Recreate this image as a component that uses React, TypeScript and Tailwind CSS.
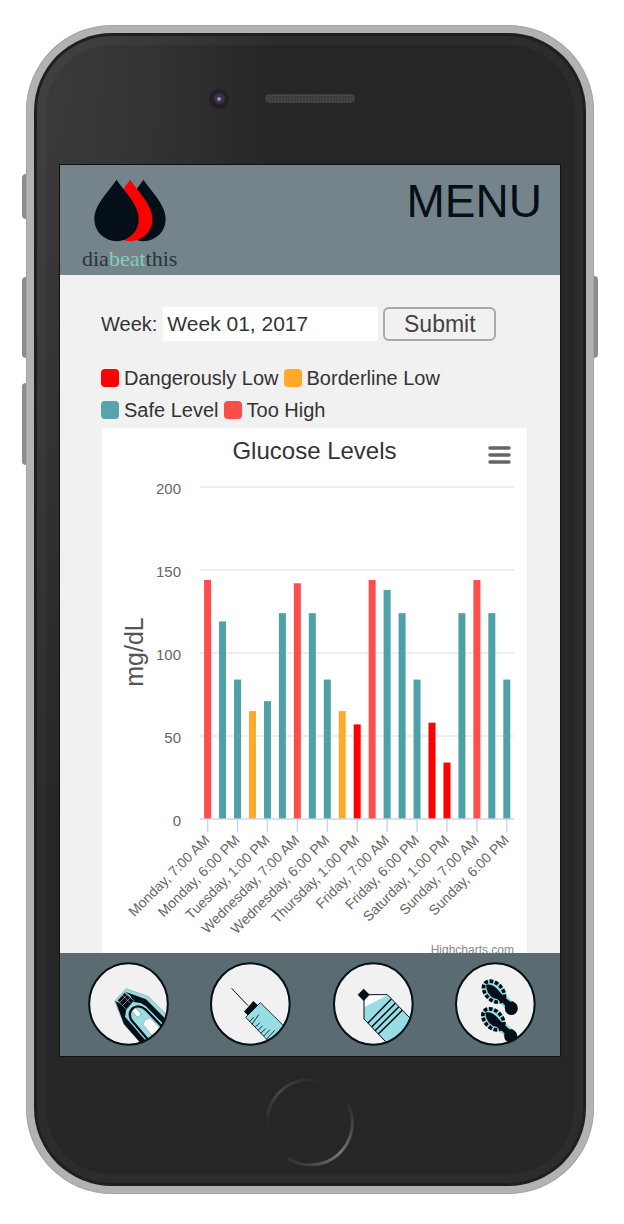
import type { ReactNode } from "react";

const TEAL = "#4fa1a8";
const HIGH = "#ff4d4d";
const LOW = "#ffaa2b";
const DANGER = "#ff0000";
const INK = "#040f17";
const AQUA = "#98dde4";

const legend = [
  { label: "Dangerously Low", swatch: "bg-[#ff0000]" },
  { label: "Borderline Low", swatch: "bg-[#ffaa2b]" },
  { label: "Safe Level", swatch: "bg-[#58a4ab]" },
  { label: "Too High", swatch: "bg-[#fb4b4b]" },
];

const readings: [number, string][] = [
  [144, HIGH], [119, TEAL], [84, TEAL], [65, LOW], [71, TEAL], [124, TEAL], [142, HIGH],
  [124, TEAL], [84, TEAL], [65, LOW], [57, DANGER], [144, HIGH], [138, TEAL], [124, TEAL],
  [84, TEAL], [58, DANGER], [34, DANGER], [124, TEAL], [144, HIGH], [124, TEAL], [84, TEAL],
];

const times = [
  "Monday, 7:00 AM", "Monday, 6:00 PM", "Tuesday, 1:00 PM", "Wednesday, 7:00 AM",
  "Wednesday, 6:00 PM", "Thursday, 1:00 PM", "Friday, 7:00 AM", "Friday, 6:00 PM",
  "Saturday, 1:00 PM", "Sunday, 7:00 AM", "Sunday, 6:00 PM",
];

const BASE = 391;
const UNIT = 1.66;
const barX = (i: number) => 105.6 + i * 14.96;

function Logo() {
  const drop = (cx: number) =>
    `M${cx},541 C${cx + 24},577 ${cx + 67},616 ${cx + 67},660 A67,66 0 0 1 ${cx - 67},660 C${cx - 67},616 ${cx - 24},577 ${cx},541Z`;
  return (
    <a href="#home" className="flex flex-col items-center">
      <svg viewBox="282 540 217 187" className="h-[63px] w-[72px]" aria-hidden="true">
        <path d={drop(431)} fill={INK} />
        <path d={drop(391)} fill="#ff0000" />
        <path d={drop(350)} fill={INK} />
      </svg>
      <span className="mt-[5px] font-['Liberation_Serif',serif] text-[22px] leading-6 text-[#26343c]">
        dia<span className="text-[#84cdba]">beat</span>this
      </span>
    </a>
  );
}

function Chart() {
  return (
    <svg viewBox="0 40 425 485" className="block w-full" role="img" aria-label="Glucose levels by time">
      {[0, 50, 100, 150, 200].map((v) => (
        <g key={v}>
          <line x1="98" x2="412" y1={BASE - v * UNIT} y2={BASE - v * UNIT} stroke={v ? "#e8e8e8" : "#ccd6eb"} strokeWidth="1.6" />
          <text x="79" y={BASE - v * UNIT + 7} textAnchor="end" fontSize="15" fill="#666">{v}</text>
        </g>
      ))}
      {readings.map(([v, color], i) => (
        <rect key={i} x={barX(i) - 3.5} y={BASE - v * UNIT} width="7" height={v * UNIT - 0.6} fill={color} />
      ))}
      {times.map((t, i) => {
        const x = barX(i * 2);
        return (
          <g key={t}>
            <line x1={x} x2={x} y1={BASE} y2={BASE + 13} stroke="#ccd6eb" strokeWidth="1.5" />
            <text transform={`translate(${x + 3},413) rotate(-45)`} textAnchor="end" fontSize="14" fill="#666">{t}</text>
          </g>
        );
      })}
      <text transform="translate(41,224) rotate(-90)" textAnchor="middle" fontSize="25" fill="#555">mg/dL</text>
      <text x="412" y="526" textAnchor="end" fontSize="12" fill="#888">Highcharts.com</text>
    </svg>
  );
}

function Disc({ box, cx, cy, id, children }: { box: string; cx: number; cy: number; id: string; children: ReactNode }) {
  return (
    <svg viewBox={box} className="h-[84px] w-[81px]" aria-hidden="true">
      <clipPath id={id}>
        <ellipse cx={cx} cy={cy} rx="117" ry="121" />
      </clipPath>
      <ellipse cx={cx} cy={cy} rx="118" ry="122" fill="#f1f1f1" />
      <g clipPath={`url(#${id})`}>{children}</g>
      <ellipse cx={cx} cy={cy} rx="118" ry="122" fill="none" stroke={INK} strokeWidth="6" />
    </svg>
  );
}

function MeterIcon() {
  return (
    <Disc box="8 4 243 252" cx={129.5} cy={130} id="meter">
      <path d="M88 121 L122 84 L188 107 L262 180 L245 262 L180 262 L116 192Z" fill={AQUA} stroke="#7b8a8e" strokeWidth="1.5" />
      <path d="M120 93 L182 116 L250 184 L240 196 L182 137 L166 127 L144 124 L136 106Z" fill={INK} />
      <path d="M90 121 L108 130 L123 146 L119 168 L192 252 L170 252 L116 190Z" fill={INK} />
      <path d="M196 246 L138 178 Q127 156 143 142 Q162 130 181 147 L244 212" fill="none" stroke={INK} strokeWidth="7" />
      <path d="M118 96 L146 120 L123 147 L97 119Z" fill={INK} stroke="#8f979a" strokeWidth="2" />
      <path d="M111 103 L135 127 M124 104 L103 125 M134 112 L112 134" fill="none" stroke="#b5babc" strokeWidth="2" />
      <rect x="-8" y="-13" width="16" height="26" rx="3" transform="translate(154,156) rotate(-42)" fill="#fff" stroke="#566" strokeWidth="1.5" />
      <path d="M174 192 L179 177 L196 173 L226 206 L202 226Z" fill="#fff" stroke="#8b999c" strokeWidth="1.5" />
    </Disc>
  );
}

function SyringeIcon() {
  return (
    <Disc box="452 49 243 252" cx={573} cy={175} id="syringe">
      <path d="M517 128 L566 180" stroke={INK} strokeWidth="3" />
      <path d="M582 166 L597 180 L568 211 L554 198Z" fill={INK} />
      <path d="M603 171 L700 267 L655 315 L559 215Z" fill={AQUA} stroke={INK} strokeWidth="2.5" />
      <path d="M570 228 L584 215 M578 236 L598 207 M587 245 L601 232 M596 254 L610 240 M604 263 L619 249 M613 271 L632 252 M621 281 L646 254" stroke={INK} strokeWidth="2.5" />
    </Disc>
  );
}

function BottleIcon() {
  return (
    <Disc box="67 49 243 252" cx={188} cy={175} id="bottle">
      <path d="M160 147 H230 L330 250 L260 330 L160 220Z" fill="#fff" />
      <path d="M160 185 L230 149 L330 250 L260 330 L160 220Z" fill={AQUA} />
      <path d="M160 147 H230 L330 250 M160 147 V220 L270 335" fill="none" stroke={INK} strokeWidth="3" />
      <path d="M159 129 L177 147 L159 166 L141 147Z" fill={INK} />
      <path d="M172 232 L242 160 M183 244 L254 173 M193 255 L264 184 M203 265 L275 194" stroke={INK} strokeWidth="4.5" />
    </Disc>
  );
}

function Footprint() {
  return (
    <g>
      <path d="M582 146 L608 168 L588 192 L562 170Z" fill={AQUA} />
      <ellipse cx="550" cy="138" rx="42" ry="30" transform="rotate(45 550 138)" fill={AQUA} />
      <ellipse cx="550" cy="138" rx="37" ry="25" transform="rotate(45 550 138)" fill="none" stroke={INK} strokeWidth="11" strokeDasharray="11 5" />
      <path d="M526 117 Q546 114 562 132 Q574 149 604 172 L588 186 Q568 160 549 158 Q527 144 526 117Z" fill={INK} />
      <path d="M582 184 Q592 168 606 167 L614 172 A20 20 0 1 1 584 197Z" fill={INK} />
    </g>
  );
}

function StepsIcon() {
  return (
    <Disc box="433 49 243 252" cx={554} cy={175} id="steps">
      <Footprint />
      <g transform="translate(-2,83)">
        <Footprint />
      </g>
    </Disc>
  );
}

const tabs = [
  { name: "Glucose", icon: <MeterIcon /> },
  { name: "Insulin", icon: <SyringeIcon /> },
  { name: "Water", icon: <BottleIcon /> },
  { name: "Activity", icon: <StepsIcon /> },
];

function HomeRing() {
  return (
    <svg viewBox="0 0 90 90" className="size-[88px]" aria-hidden="true">
      <defs>
        <linearGradient id="ringTop" x1="0" y1="1" x2="1" y2="0">
          <stop offset="0" stopColor="#262626" />
          <stop offset="0.5" stopColor="#484848" />
          <stop offset="1" stopColor="#262626" />
        </linearGradient>
        <linearGradient id="ringBottom" x1="1" y1="0" x2="0" y2="1">
          <stop offset="0" stopColor="#2a2a2a" />
          <stop offset="0.5" stopColor="#777" />
          <stop offset="1" stopColor="#2a2a2a" />
        </linearGradient>
      </defs>
      <path d="M2 52 A43 43 0 0 1 55 3" fill="none" stroke="url(#ringTop)" strokeWidth="3" />
      <path d="M84 27 A43 43 0 0 1 22 82" fill="none" stroke="url(#ringBottom)" strokeWidth="3" />
    </svg>
  );
}

export default function App() {
  return (
    <div className="min-h-screen bg-white pt-[25px] pr-[30px] pb-[30px] pl-[26px] font-['Liberation_Sans',Arial,sans-serif] text-[#333]">
      <div className="relative rounded-[86px] bg-[#b2b2b2] p-2 shadow-[inset_0_0_0_1px_#a6a6a6]">
        <span className="absolute top-[149px] -left-1 h-[45px] w-1 rounded-l-sm bg-[#8d8d91]" />
        <span className="absolute top-[252px] -left-1 h-[81px] w-1 rounded-l-sm bg-[#8d8d91]" />
        <span className="absolute top-[358px] -left-1 h-[82px] w-1 rounded-l-sm bg-[#8d8d91]" />
        <span className="absolute top-[251px] -right-1 h-[82px] w-1 rounded-r-sm bg-[#8d8d91]" />

        <div className="rounded-[78px] bg-[#262626] bg-[radial-gradient(ellipse_240px_800px_at_0_0,#3b3b3b_0%,#343434_45%,#262626_100%)] px-[25px] shadow-[inset_0_0_0_3px_#1f1f1f,inset_0_0_0_12px_rgba(255,255,255,0.03)]">
          <div className="grid h-[131px] grid-cols-[1fr_90px_1fr] items-center">
            <span className="mr-9 grid size-5 place-items-center justify-self-end rounded-full bg-[#212121]">
              <span className="grid size-[11px] place-items-center rounded-full bg-[#3a2e52]">
                <span className="size-1 rounded-full bg-[#9a90ad]" />
              </span>
            </span>
            <span className="h-[9px] rounded-full bg-[#3d3d3d] bg-[radial-gradient(#555_1px,transparent_1px)] bg-size-[3px_3px]" />
          </div>

          <div className="border border-[#111] bg-[#f1f1f1]">
            <header className="flex h-[110px] items-start justify-between bg-[#75848a] pt-[14px] pr-[18px] pl-[22px]">
              <Logo />
              <button type="button" className="text-[46px] leading-[44px] text-[#040f17]">MENU</button>
            </header>

            <main className="pt-8 pr-[33px] pl-[41px]">
              <form className="flex h-[34px] items-center" onSubmit={(e) => e.preventDefault()}>
                <label htmlFor="week" className="mr-[6px] text-[20px]">Week:</label>
                <input id="week" type="text" defaultValue="Week 01, 2017" className="h-[34px] w-[215px] min-w-0 bg-white px-1 text-[21px] outline-none" />
                <button type="submit" className="ml-[5px] h-[34px] w-[113px] rounded-md border-2 border-[#a9a9a9] text-[23px] leading-[30px] text-[#444]">Submit</button>
              </form>

              <ul className="mt-[21px] flex flex-wrap gap-x-[5px] text-[20px] leading-8">
                {legend.map((l) => (
                  <li key={l.label} className="flex items-center gap-[5px]">
                    <span className={`size-[18px] rounded ${l.swatch}`} />
                    {l.label}
                  </li>
                ))}
              </ul>

              <section className="relative mt-[2px] ml-px bg-white">
                <h2 className="h-10 text-center text-[24px] leading-[46px]">Glucose Levels</h2>
                <button type="button" aria-label="Chart menu" className="absolute top-[17px] right-4 p-0">
                  <svg viewBox="0 0 23 20" className="h-5 w-[23px]" aria-hidden="true">
                    <path d="M2 3 H21 M2 10 H21 M2 17 H21" stroke="#666" strokeWidth="3.5" strokeLinecap="round" />
                  </svg>
                </button>
                <Chart />
              </section>
            </main>

            <nav className="flex h-[103px] items-center justify-between bg-[#5a6b72] pr-6 pb-[2px] pl-7">
              {tabs.map((t) => (
                <button key={t.name} type="button" aria-label={t.name}>{t.icon}</button>
              ))}
            </nav>
          </div>

          <div className="grid h-[129px] place-items-center">
            <button type="button" aria-label="Home"><HomeRing /></button>
          </div>
        </div>
      </div>
    </div>
  );
}
